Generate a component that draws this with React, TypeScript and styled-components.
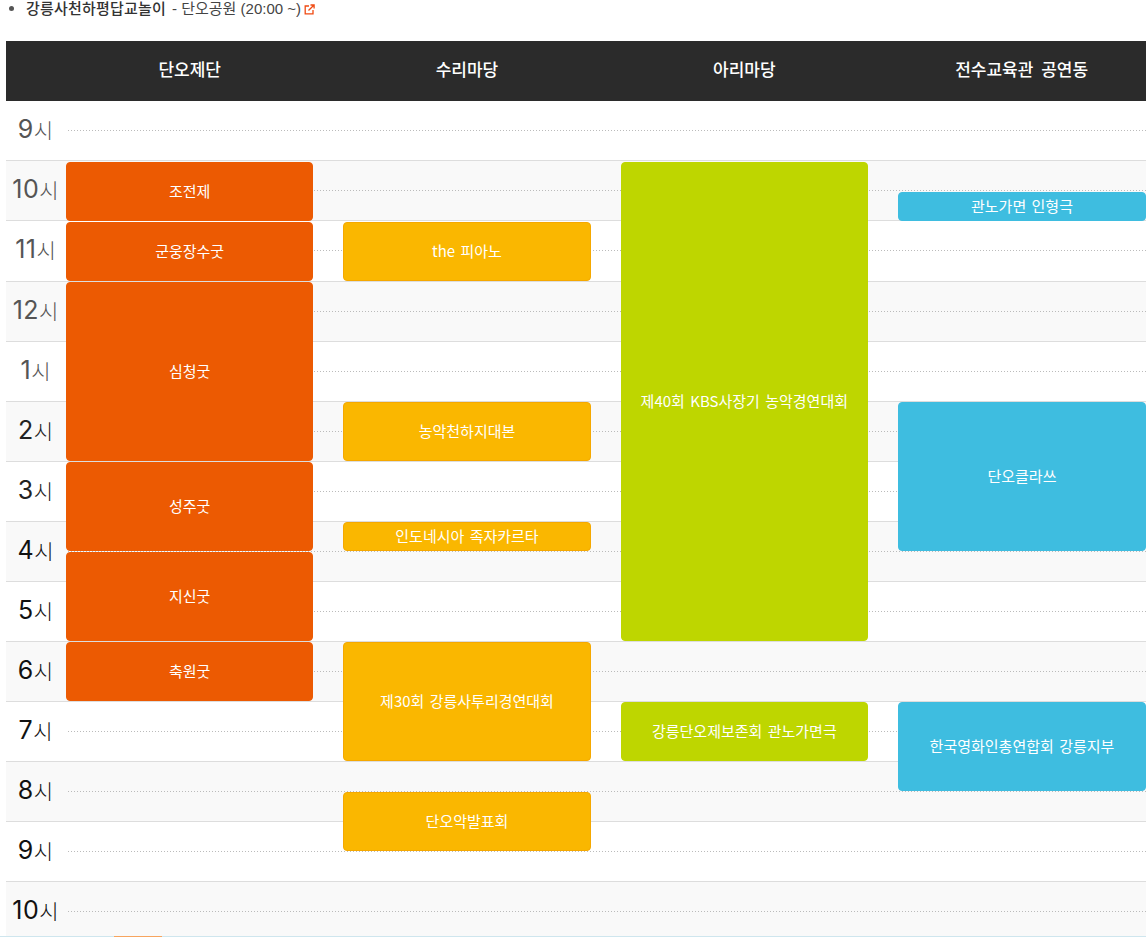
import React from "react";
import styled, { createGlobalStyle } from "styled-components";

const Global = createGlobalStyle`
  html, body { margin: 0; padding: 0; background: #fff; overflow: hidden; }
  body { height: 937px; font-family: "Noto Sans CJK KR", "Noto Sans", sans-serif; }
`;

const Page = styled.div`
  position: relative;
  width: 1146px;
  height: 937px;
  overflow: hidden;
`;

const Note = styled.p`
  display: flex;
  align-items: center;
  height: 17px;
  margin: 0 0 24px 9px;
  font-family: "Liberation Sans", "Noto Sans CJK KR", sans-serif;
  font-size: 15px;
  line-height: 17px;
  color: #444;
  white-space: nowrap;
`;

const Bullet = styled.span`
  width: 5px;
  height: 5px;
  margin-right: 12px;
  border-radius: 50%;
  background: #555;
`;

const NoteTitle = styled.strong`
  font-size: 15px;
  font-weight: 500;
  letter-spacing: 0.2px;
  color: #333;
  margin-right: 6px;
`;

const LinkIcon = styled.svg`
  width: 11px;
  height: 11px;
  margin-left: 3px;
  margin-top: 2px;
`;

const Table = styled.section`
  position: relative;
  margin-left: 6px;
  width: 1140px;
`;

const Head = styled.div`
  display: grid;
  grid-template-columns: repeat(4, 247.33px);
  column-gap: 30px;
  box-sizing: border-box;
  height: 60px;
  padding: 0 0 5px 60px;
  align-items: center;
  background: #2b2b2b;
  color: #fff;
  font-size: 17px;
  font-weight: 500;
  word-spacing: 4px;
  text-align: center;
`;

const HourRow = styled.div<{ $shaded: boolean; $tone: string; $tall: boolean }>`
  display: flex;
  align-items: center;
  box-sizing: border-box;
  height: ${(p) => (p.$tall ? 61 : 60)}px;
  border-bottom: 1px solid #ddd;
  background: ${(p) => (p.$shaded ? "#f9f9f9" : "#fff")};
  color: ${(p) => p.$tone};
`;

const HourLabel = styled.div`
  flex: 0 0 57px;
  margin: 0 0 4px 1px;
  text-align: center;
  font-size: 21px;
  line-height: 54px;
  font-weight: 300;
  white-space: nowrap;
`;

const HourNum = styled.span`
  font-family: Inter, "Noto Sans", sans-serif;
  font-size: 25px;
  font-weight: 400;
  letter-spacing: 0.5px;
`;

const Dots = styled.div`
  flex: 1;
  height: 1px;
  margin: 0 0 1px 4px;
  background-image: linear-gradient(to right, #bbb 1px, transparent 1px);
  background-size: 3px 1px;
`;

const EventLayer = styled.div`
  position: absolute;
  top: 121px;
  left: 60px;
  display: grid;
  grid-template-columns: repeat(3, 247.33px) 248px;
  grid-auto-rows: 30px;
  column-gap: 30px;
`;

const Event = styled.div<{ $col: number; $from: number; $to: number; $bg: string; $edge: string }>`
  grid-column: ${(p) => p.$col};
  grid-row: ${(p) => p.$from + 1} / ${(p) => p.$to + 1};
  display: flex;
  align-items: center;
  justify-content: center;
  margin-bottom: 1px;
  padding-bottom: 2px;
  box-sizing: border-box;
  border-radius: 4px;
  border: 1px solid ${(p) => p.$edge};
  background: ${(p) => p.$bg};
  color: #fff;
  font-size: 15px;
  word-spacing: 2px;
  line-height: 1;
  text-align: center;
`;

const BottomStrip = styled.div`
  position: absolute;
  left: 0;
  right: 0;
  bottom: 0;
  height: 1px;
  background: #cfe6ee;
`;

const BottomTab = styled.div`
  position: absolute;
  left: 114px;
  bottom: 0;
  width: 48px;
  height: 1px;
  background: #f7a55f;
`;

const ORANGE = { $bg: "#ec5a02", $edge: "#ec5a02" };
const AMBER = { $bg: "#fab700", $edge: "#f5a800" };
const LIME = { $bg: "#bed600", $edge: "#bed600" };
const SKY = { $bg: "#3ebde0", $edge: "#3ebde0" };

const columns = ["단오제단", "수리마당", "아리마당", "전수교육관 공연동"];

const hours = [
  { n: "9", c: "#555" },
  { n: "10", c: "#555" },
  { n: "11", c: "#555" },
  { n: "12", c: "#555" },
  { n: "1", c: "#555" },
  { n: "2", c: "#222" },
  { n: "3", c: "#222" },
  { n: "4", c: "#111" },
  { n: "5", c: "#111" },
  { n: "6", c: "#111" },
  { n: "7", c: "#111" },
  { n: "8", c: "#111" },
  { n: "9", c: "#111" },
  { n: "10", c: "#111" },
];

const events = [
  { col: 1, from: 0, to: 2, name: "조전제", s: ORANGE },
  { col: 1, from: 2, to: 4, name: "군웅장수굿", s: ORANGE },
  { col: 1, from: 4, to: 10, name: "심청굿", s: ORANGE },
  { col: 1, from: 10, to: 13, name: "성주굿", s: ORANGE },
  { col: 1, from: 13, to: 16, name: "지신굿", s: ORANGE },
  { col: 1, from: 16, to: 18, name: "축원굿", s: ORANGE },
  { col: 2, from: 2, to: 4, name: "the 피아노", s: AMBER },
  { col: 2, from: 8, to: 10, name: "농악천하지대본", s: AMBER },
  { col: 2, from: 12, to: 13, name: "인도네시아 족자카르타", s: AMBER },
  { col: 2, from: 16, to: 20, name: "제30회 강릉사투리경연대회", s: AMBER },
  { col: 2, from: 21, to: 23, name: "단오악발표회", s: AMBER },
  { col: 3, from: 0, to: 16, name: "제40회 KBS사장기 농악경연대회", s: LIME },
  { col: 3, from: 18, to: 20, name: "강릉단오제보존회 관노가면극", s: LIME },
  { col: 4, from: 1, to: 2, name: "관노가면 인형극", s: SKY },
  { col: 4, from: 8, to: 13, name: "단오클라쓰", s: SKY },
  { col: 4, from: 18, to: 21, name: "한국영화인총연합회 강릉지부", s: SKY },
];

export default function App() {
  return (
    <Page>
      <Global />
      <Note>
        <Bullet />
        <NoteTitle>강릉사천하평답교놀이</NoteTitle>- 단오공원 (20:00 ~)
        <LinkIcon viewBox="0 0 11 11" fill="none" stroke="#f04a12" strokeWidth="1.3">
          <path d="M5 2H1.2v7.8H9V6" />
          <path d="M4.5 6.5 9.8 1.2M6.5 1h3.6v3.6" />
        </LinkIcon>
      </Note>
      <Table>
        <Head>
          {columns.map((c) => (
            <span key={c}>{c}</span>
          ))}
        </Head>
        {hours.map((h, i) => (
          <HourRow key={i} $shaded={i % 2 === 1} $tone={h.c} $tall={i === 2}>
            <HourLabel>
              <HourNum>{h.n}</HourNum>시
            </HourLabel>
            <Dots />
          </HourRow>
        ))}
        <EventLayer>
          {events.map((e) => (
            <Event key={e.name} $col={e.col} $from={e.from} $to={e.to} {...e.s}>
              {e.name}
            </Event>
          ))}
        </EventLayer>
      </Table>
      <BottomStrip />
      <BottomTab />
    </Page>
  );
}
